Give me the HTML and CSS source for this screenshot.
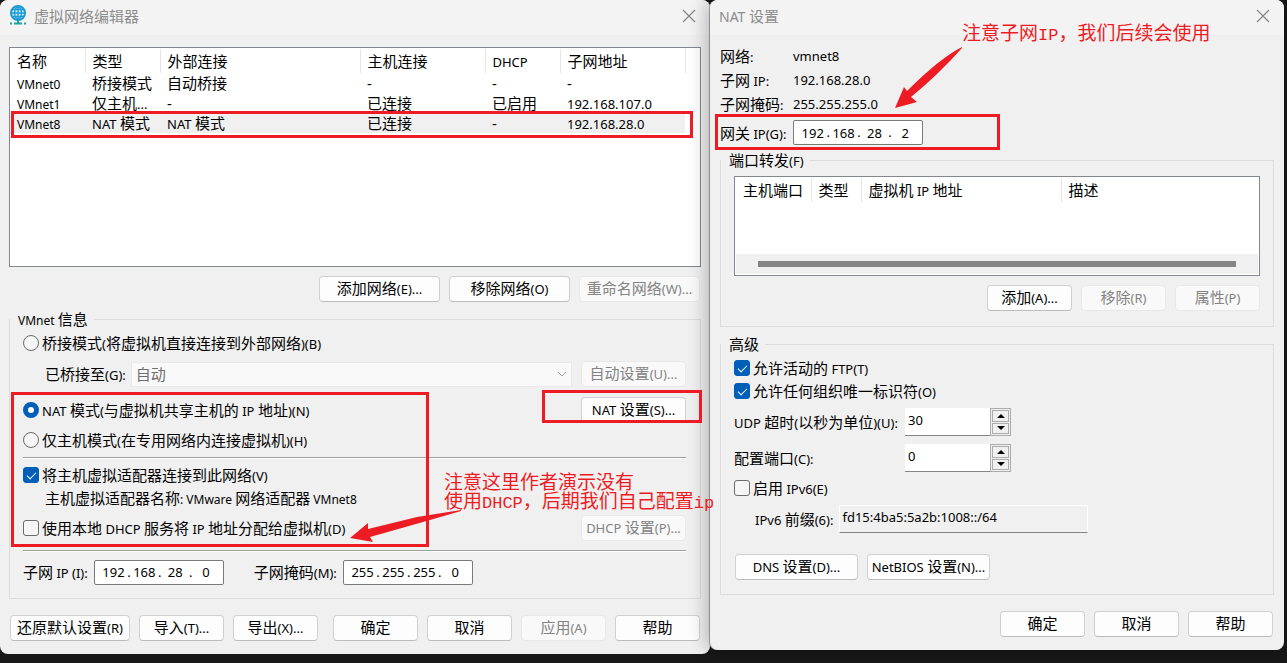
FILE: index.html
```html
<!DOCTYPE html>
<html lang="zh-CN">
<head>
<meta charset="utf-8">
<title>虚拟网络编辑器</title>
<link rel="stylesheet" href="styles.css">
</head>
<body>
<main class="desktop">
  <section class="window editor">
    <header class="titlebar">
      <svg class="logo" width="18" height="21" viewBox="0 0 18 21" aria-hidden="true">
        <circle cx="9" cy="8" r="7" fill="#c9ecfa" stroke="#1b9ad2" stroke-width="2"/>
        <path d="M9 1v14M2 8h14M3 4.500h12M3 11.500h12M9 1C4.500 4 4.500 12 9 15M9 1c4.500 3 4.500 11 0 14" fill="none" stroke="#1b9ad2" stroke-width="1.300"/>
        <path d="M9 15v4M5 18.500h8" stroke="#1fa49a" stroke-width="2"/>
        <path d="M1 18.500h2M15 18.500h2" stroke="#1fa49a" stroke-width="2"/>
      </svg>
      <h1>虚拟网络编辑器</h1>
      <button class="close" aria-label="关闭"><svg width="14" height="14" viewBox="0 0 14 14"><path d="M1 1l12 12M13 1L1 13" stroke="#858585" stroke-width="1.200"/></svg></button>
    </header>

    <div class="listbox networks">
      <table>
        <colgroup><col class="w75"><col class="w75"><col class="w200"><col class="w125"><col class="w75"><col class="w125"><col></colgroup>
        <thead><tr><th>名称</th><th>类型</th><th>外部连接</th><th>主机连接</th><th><span class="en">DHCP</span></th><th>子网地址</th><th></th></tr></thead>
        <tbody>
          <tr><td><span class="en name">VMnet0</span></td><td>桥接模式</td><td>自动桥接</td><td>-</td><td>-</td><td>-</td><td></td></tr>
          <tr><td><span class="en name">VMnet1</span></td><td>仅主机<span class="en">...</span></td><td>-</td><td>已连接</td><td>已启用</td><td><span class="en">192.168.107.0</span></td><td></td></tr>
          <tr class="selected"><td><span class="en name">VMnet8</span></td><td><span class="en">NAT </span>模式</td><td><span class="en">NAT </span>模式</td><td>已连接</td><td>-</td><td><span class="en">192.168.28.0</span></td><td></td></tr>
        </tbody>
      </table>
    </div>

    <div class="actions network-actions">
      <button class="btn wide">添加网络<span class="en">(E)...</span></button>
      <button class="btn wide">移除网络<span class="en">(O)</span></button>
      <button class="btn wide" disabled>重命名网络<span class="en">(W)...</span></button>
    </div>

    <fieldset class="info">
      <legend><span class="en name">VMnet </span>信息</legend>
      <div class="row"><label class="choice"><input type="radio" name="mode">桥接模式<span class="en">(</span>将虚拟机直接连接到外部网络<span class="en">)(B)</span></label></div>
      <div class="row bridge">
        <label for="bridge">已桥接至<span class="en">(G):</span></label>
        <select id="bridge" disabled><option>自动</option></select>
        <button class="btn side" disabled>自动设置<span class="en">(U)...</span></button>
      </div>
      <div class="row nat">
        <label class="choice"><input type="radio" name="mode" checked><span class="en">NAT </span>模式<span class="en">(</span>与虚拟机共享主机的<span class="en"> IP </span>地址<span class="en">)(N)</span></label>
        <button class="btn side"><span class="en">NAT </span>设置<span class="en">(S)...</span></button>
      </div>
      <div class="row short"><label class="choice"><input type="radio" name="mode">仅主机模式<span class="en">(</span>在专用网络内连接虚拟机<span class="en">)(H)</span></label></div>
      <hr>
      <div class="row short"><label class="choice"><input type="checkbox" checked>将主机虚拟适配器连接到此网络<span class="en">(V)</span></label></div>
      <p class="adapter">主机虚拟适配器名称<span class="en name">: VMware </span>网络适配器<span class="en name"> VMnet8</span></p>
      <div class="row dhcp">
        <label class="choice"><input type="checkbox">使用本地<span class="en"> DHCP </span>服务将<span class="en"> IP </span>地址分配给虚拟机<span class="en">(D)</span></label>
        <button class="btn side" disabled><span class="en">DHCP </span>设置<span class="en">(P)...</span></button>
      </div>
      <hr>
      <div class="row subnet">
        <label for="sub1">子网<span class="en"> IP (I):</span></label>
        <div class="ip"><input id="sub1" value="192"><i>.</i><input aria-label="子网 IP 2" value="168"><i>.</i><input aria-label="子网 IP 3" value="28"><i>.</i><input aria-label="子网 IP 4" value="0"></div>
        <label class="mask" for="mask1">子网掩码<span class="en">(M):</span></label>
        <div class="ip"><input id="mask1" value="255"><i>.</i><input aria-label="掩码 2" value="255"><i>.</i><input aria-label="掩码 3" value="255"><i>.</i><input aria-label="掩码 4" value="0"></div>
      </div>
    </fieldset>

    <footer class="actions editor-footer">
      <button class="btn restore">还原默认设置<span class="en">(R)</span></button>
      <button class="btn">导入<span class="en">(T)...</span></button>
      <button class="btn">导出<span class="en">(X)...</span></button>
      <button class="btn confirm">确定</button>
      <button class="btn">取消</button>
      <button class="btn" disabled>应用<span class="en">(A)</span></button>
      <button class="btn">帮助</button>
    </footer>
  </section>

  <section class="window nat-window">
    <header class="titlebar">
      <h1><span class="title-en">NAT </span>设置</h1>
      <button class="close" aria-label="关闭"><svg width="14" height="14" viewBox="0 0 14 14"><path d="M1 1l12 12M13 1L1 13" stroke="#858585" stroke-width="1.200"/></svg></button>
    </header>

    <div class="details">
      <span>网络<span class="en">:</span></span><span class="en">vmnet8</span>
      <span>子网<span class="en"> IP:</span></span><span class="en">192.168.28.0</span>
      <span>子网掩码<span class="en">:</span></span><span class="en">255.255.255.0</span>
      <label for="gw1">网关<span class="en"> IP(G):</span></label>
      <div class="ip"><input id="gw1" value="192"><i>.</i><input aria-label="网关 2" value="168"><i>.</i><input aria-label="网关 3" value="28"><i>.</i><input aria-label="网关 4" value="2"></div>
    </div>

    <fieldset class="ports">
      <legend>端口转发<span class="en">(F)</span></legend>
      <div class="listbox forwarding">
        <table>
          <colgroup><col class="w75"><col class="w50"><col class="w200"><col></colgroup>
          <thead><tr><th>主机端口</th><th>类型</th><th>虚拟机<span class="en"> IP </span>地址</th><th>描述</th></tr></thead>
        </table>
        <div class="scrollbar"><div class="thumb"></div></div>
      </div>
      <div class="actions">
        <button class="btn">添加<span class="en">(A)...</span></button>
        <button class="btn" disabled>移除<span class="en">(R)</span></button>
        <button class="btn" disabled>属性<span class="en">(P)</span></button>
      </div>
    </fieldset>

    <fieldset class="advanced">
      <legend>高级</legend>
      <label class="choice line"><input type="checkbox" checked>允许活动的<span class="en"> FTP(T)</span></label>
      <label class="choice line"><input type="checkbox" checked>允许任何组织唯一标识符<span class="en">(O)</span></label>
      <div class="setting">
        <label for="udp"><span class="en">UDP </span>超时<span class="en">(</span>以秒为单位<span class="en">)(U):</span></label>
        <div class="spinner"><input id="udp" value="30"><div class="steps"><button class="up" aria-label="增加"></button><button class="down" aria-label="减少"></button></div></div>
      </div>
      <div class="setting">
        <label for="port">配置端口<span class="en">(C):</span></label>
        <div class="spinner"><input id="port" value="0"><div class="steps"><button class="up" aria-label="增加"></button><button class="down" aria-label="减少"></button></div></div>
      </div>
      <label class="choice line"><input type="checkbox">启用<span class="en"> IPv6(E)</span></label>
      <div class="prefix">
        <label for="prefix"><span class="en">IPv6 </span>前缀<span class="en">(6):</span></label>
        <input id="prefix" value="fd15:4ba5:5a2b:1008::/64" readonly>
      </div>
      <div class="actions extra">
        <button class="btn"><span class="en">DNS </span>设置<span class="en">(D)...</span></button>
        <button class="btn"><span class="en">NetBIOS </span>设置<span class="en">(N)...</span></button>
      </div>
    </fieldset>

    <footer class="actions nat-footer">
      <button class="btn">确定</button>
      <button class="btn">取消</button>
      <button class="btn">帮助</button>
    </footer>
  </section>

  <div class="notes">
    <div class="mark mark-network"></div>
    <div class="mark mark-options"></div>
    <div class="mark mark-nat"></div>
    <div class="mark mark-gateway"></div>
    <svg class="arrow arrow-gateway" width="68" height="62" viewBox="894 47 68 62" aria-hidden="true"><path d="M962 47Q940 58 907 91L904 87L895 108L917 102L911 97Q938 75 962 48Z" fill="#ed1c24"/></svg>
    <svg class="arrow arrow-dhcp" width="112" height="34" viewBox="350 510 112 34" aria-hidden="true"><path d="M461 510L417 517L368 529L368 523L350 538L373 542L370 537L423 522L461 511Z" fill="#ed1c24"/></svg>
    <p class="note note-subnet">注意子网<span>IP</span>，我们后续会使用</p>
    <p class="note note-dhcp">注意这里作者演示没有<br>使用<span>DHCP</span>，后期我们自己配置<span>ip</span></p>
  </div>
</main>
</body>
</html>
```
FILE: styles.css
```css
* { box-sizing: border-box; }

body {
  margin: 0;
  background: #181818;
  color: #000;
  font: 15px/20px "Noto Sans", "Noto Sans CJK SC", sans-serif;
}

button, input, select { font: inherit; color: inherit; margin: 0; }
p, h1 { margin: 0; font: inherit; }

.en { font-size: 13px; line-height: 1; white-space: pre; }
.name { font-size: 12px; }
.title-en { font-size: 14px; line-height: 1; }

.desktop {
  position: relative;
  display: grid;
  grid-template-columns: 710fr 574fr;
  align-items: start;
  min-height: 100vh;
  padding-right: 3px;
}

.window {
  background: #f0f0f0;
  border-radius: 8px;
  white-space: nowrap;
}
.editor { padding: 0 9px 13px; }
.nat-window {
  padding: 0 10px 13px;
  box-shadow: -2px 0 20px rgba(0, 0, 0, .3), -1px 0 0 #aaa;
}

.titlebar {
  display: flex;
  align-items: center;
  gap: 7px;
  height: 35px;
  margin: 0 -9px;
  padding: 0 12px 4px 9px;
  background: #f3f3f3;
  border-radius: 8px 8px 0 0;
  color: #8c8c8c;
}
.nat-window .titlebar { margin: 0 -10px; }
.close {
  display: flex;
  margin-left: auto;
  padding: 2px;
  border: 0;
  background: none;
}

.listbox {
  background: #fff;
  border: 1px solid #828790;
}
.networks { height: 220px; margin-top: 12px; padding-top: 1px; }
table { width: 100%; table-layout: fixed; border-collapse: collapse; }
th, td { padding: 0 0 0 7px; font-weight: 400; text-align: left; line-height: 20px; }
th { height: 24px; border-right: 1px solid #e5e5e5; }
th:last-child { border-right: 0; }
td { height: 20px; }
.selected td { background: #f0f0f0; }
.selected td:last-child { background: none; }
.w50 { width: 50px; }
.w75 { width: 75px; }
.w125 { width: 125px; }
.w200 { width: 200px; }

.actions { display: flex; gap: 9px; }
.network-actions { justify-content: flex-end; margin-top: 9px; padding-right: 1px; }

.btn {
  display: flex;
  align-items: baseline;
  justify-content: center;
  width: 85px;
  height: 26px;
  padding: 1px 0;
  border: 1px solid #d0d0d0;
  border-bottom-color: #bcbcbc;
  border-radius: 4px;
  background: #fdfdfd;
  line-height: 20px;
}
.btn:disabled { background: #f9f9f9; border-color: #e8e8e8; color: #838383; }
.wide { width: 121px; }
.side { width: 105px; margin-left: auto; }

fieldset {
  min-width: 0;
  margin: 0;
  border: 1px solid #dcdcdc;
}
legend { height: 20px; margin-left: -13px; padding: 0 6px 0 8px; }
.info { margin-top: 7px; padding: 1px 14px 13px 13px; }

.row { display: flex; align-items: center; min-height: 26px; }
.short { min-height: 20px; }
.bridge { margin-top: 5px; padding-left: 22px; }
.nat { margin-top: 10px; }
.nat + .short { margin-top: 7px; }

.choice { display: flex; align-items: baseline; }
.choice input {
  appearance: none;
  align-self: center;
  flex: none;
  width: 16px;
  height: 16px;
  margin-right: 3px;
  border: 1px solid #6b6b6b;
  background: #f6f6f6;
}
.choice input[type="radio"] { border-radius: 50%; }
.choice input[type="checkbox"] { border-radius: 3px; }
.choice input[type="radio"]:checked { border: 5px solid #005fb8; background: #fff; }
.choice input[type="checkbox"]:checked { border-color: #005fb8; background: #005fb8; }
.choice input[type="checkbox"]:checked::after {
  content: "";
  display: block;
  width: 8px;
  height: 4px;
  margin: 4px 3px;
  border: solid #fff;
  border-width: 0 0 1px 1px;
  transform: rotate(-45deg);
}

select {
  appearance: none;
  flex: 1;
  height: 25px;
  margin: 0 9px 0 5px;
  padding: 0 4px;
  border: 1px solid #e9e9e9;
  border-radius: 0;
  background: #f9f9f9 url("data:image/svg+xml,%3Csvg xmlns='http://www.w3.org/2000/svg' width='10' height='6'%3E%3Cpath d='M1 1l4 4 4-4' fill='none' stroke='%23a0a0a0'/%3E%3C/svg%3E") no-repeat right 4px center;
}
select:disabled { color: #6d6d6d; opacity: 1; }

hr {
  height: 2px;
  margin: 7px 0 6px;
  border: 0;
  border-top: 1px solid #a0a0a0;
  border-bottom: 1px solid #fff;
}
.adapter { margin-top: 3px; padding-left: 22px; }
.dhcp { margin-top: 7px; }
.dhcp + hr { margin: 9px 0 7px; }

.ip {
  display: flex;
  width: 130px;
  height: 25px;
  padding: 0 3px 0 5px;
  border: 1px solid #7a7a7a;
  border-radius: 2px;
  background: #fff;
  font-size: 13px;
  line-height: 22px;
}
.ip input {
  flex: 1;
  min-width: 0;
  padding: 0;
  border: 0;
  background: none;
  text-align: center;
}
.ip i { font-style: normal; }
.subnet .ip { margin-left: 6px; }
.mask { margin-left: 30px; }

.editor-footer { margin-top: 16px; padding: 0 1px; }
.restore { width: 120px; margin-right: auto; }
.confirm { margin-left: 6px; }

.details {
  display: grid;
  grid-template-columns: 73px auto;
  align-items: center;
  justify-content: start;
  row-gap: 4px;
  padding-top: 11px;
}
.details > .en { line-height: 20px; }
.details .ip, .details label { margin-top: 2px; }

.ports { margin-top: 5px; padding: 6px 13px 15px; }
.forwarding { display: flex; flex-direction: column; height: 100px; padding: 1px; }
.scrollbar { height: 20px; margin-top: auto; padding: 7px 22px; background: #f0f0f0; }
.thumb { height: 6px; background: #858585; }
.ports .actions { justify-content: flex-end; margin-top: 9px; }

.advanced { margin-top: 7px; padding: 4px 13px 14px; }
.line { margin-bottom: 3px; }
.setting {
  display: grid;
  grid-template-columns: 171px 106px;
  align-items: center;
  margin-top: 7px;
  margin-bottom: 6px;
}
.setting + .setting { margin-top: 8px; }
.spinner { display: flex; height: 28px; }
.spinner input {
  width: 85px;
  padding: 0 3px 4px;
  border: 0;
  border-bottom: 1px solid #858585;
  background: #fff;
  font-size: 13px;
}
.steps {
  display: flex;
  flex-direction: column;
  gap: 1px;
  flex: 1;
  padding: 1px;
  border: 1px solid #acacac;
}
.steps button {
  display: flex;
  flex: 1;
  align-items: center;
  justify-content: center;
  padding: 0;
  border: 1px solid #acacac;
  background: #f0f0f0;
}
.steps button::before { content: ""; border: 4px solid transparent; }
.steps .up::before { border-top-width: 0; border-bottom-color: #000; }
.steps .down::before { border-bottom-width: 0; border-top-color: #000; }

.prefix { display: flex; align-items: center; gap: 6px; margin-top: 7px; padding-left: 21px; }
.prefix input {
  width: 249px;
  height: 28px;
  padding: 0 2px 4px;
  border: 1px solid #fff;
  border-bottom-color: #858585;
  background: #f0f0f0;
  font-size: 13px;
}
.extra { margin-top: 21px; padding-left: 1px; }
.extra .btn { width: 123px; }
.nat-footer { justify-content: flex-end; margin-top: 16px; padding-right: 1px; }

/* Annotations laid over both windows */
.notes { position: absolute; inset: 0; pointer-events: none; color: #ed1c24; }
.mark { position: absolute; border: 3px solid #ed1c24; }
.mark-network { left: 11px; top: 111px; width: 682px; height: 27px; }
.mark-options { left: 11px; top: 392px; width: 418px; height: 155px; }
.mark-nat { left: 542px; top: 390px; width: 160px; height: 33px; }
.mark-gateway { left: 715px; top: 114px; width: 285px; height: 36px; }
.arrow { position: absolute; }
.arrow-gateway { left: 894px; top: 47px; }
.arrow-dhcp { left: 350px; top: 510px; }
.note {
  position: absolute;
  white-space: nowrap;
  font-family: "Noto Sans CJK SC", sans-serif;
  font-size: 19px;
  line-height: 19px;
}
.note span { font-family: "Liberation Mono", monospace; font-size: 17px; line-height: 1; }
.note-subnet { left: 962px; top: 22px; }
.note-dhcp { left: 444px; top: 471px; }
```
